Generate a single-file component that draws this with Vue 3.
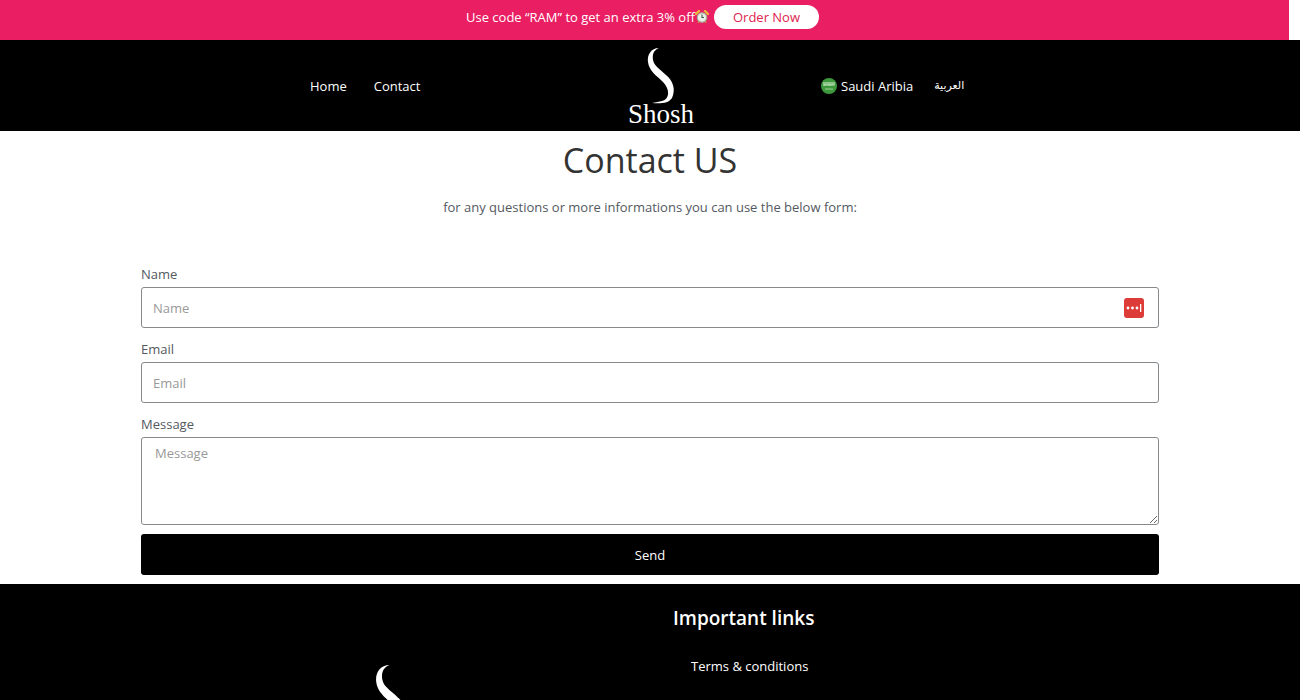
<script setup>
import { ref } from 'vue'

const name = ref('')
const email = ref('')
const message = ref('')
const swoosh = 'M31 0C23 0 19 7 20 14C21 23 29 28 35 34C42 41 42 51 34 53C31 54 28 54 24 55C33 56 41 55 44 50C48 41 45 33 38 27C32 21 26 18 25 12C24 6 26 2 31 0Z'
</script>

<template>
  <div class="page">
    <div class="promo">
      <span class="promo-text">Use code “RAM” to get an extra 3% off</span>
      <svg class="clock" viewBox="0 0 14 14" aria-hidden="true">
        <path d="M1 4L4 1M10 1L13 4" stroke="#efb53d" stroke-width="2.4" stroke-linecap="round" />
        <path d="M3 13L4 11M11 13L10 11" stroke="#cf8f3a" stroke-width="1.4" />
        <circle cx="7" cy="7.500" r="4.700" fill="#e9f1e6" stroke="#a9ad98" stroke-width="1.200" />
        <path d="M7 4.500V7.500H9" fill="none" stroke="#48574f" stroke-width="1.100" />
      </svg>
      <button class="order" type="button">Order Now</button>
    </div>

    <header class="header">
      <div class="header-inner">
        <nav class="nav">
          <a href="#">Home</a>
          <a href="#">Contact</a>
        </nav>
        <a class="logo" href="#">
          <svg class="logo-mark" viewBox="0 0 66 56" aria-hidden="true"><path :d="swoosh" fill="#fff" /></svg>
          <span class="logo-name">Shosh</span>
        </a>
        <nav class="locale">
          <a class="country" href="#">
            <svg class="flag" viewBox="0 0 16 16" aria-hidden="true">
              <circle cx="8" cy="8" r="8" fill="#3c9a3c" />
              <path d="M3 4V8M5 4V7H7V4M9 4V8M11 4V7H13V4M3 7H13" fill="none" stroke="#c4e3bd" stroke-width="1.200" />
              <path d="M4 11H12" stroke="#9dcf98" />
            </svg>
            <span>Saudi Aribia</span>
          </a>
          <a class="arabic" href="#" lang="ar">العربية</a>
        </nav>
      </div>
    </header>

    <main class="main">
      <h1>Contact US</h1>
      <p class="intro">for any questions or more informations you can use the below form:</p>
      <form class="form" @submit.prevent>
        <label for="name">Name</label>
        <div class="field">
          <input id="name" v-model="name" type="text" placeholder="Name" />
          <svg class="filler" viewBox="0 0 20 20" aria-hidden="true">
            <rect width="20" height="20" rx="3" fill="#dc3b38" />
            <circle cx="4" cy="10" r="1.400" fill="#fff" />
            <circle cx="8.500" cy="10" r="1.400" fill="#fff" />
            <circle cx="13" cy="10" r="1.400" fill="#fff" />
            <rect x="16" y="6" width="1.300" height="8" fill="#fff" />
          </svg>
        </div>
        <label for="email">Email</label>
        <div class="field">
          <input id="email" v-model="email" type="email" placeholder="Email" />
        </div>
        <label for="message">Message</label>
        <textarea id="message" v-model="message" placeholder="Message"></textarea>
        <button class="send" type="submit">Send</button>
      </form>
    </main>

    <footer class="footer">
      <div class="footer-inner">
        <div class="footer-brand">
          <svg class="footer-mark" viewBox="0 0 66 56" aria-hidden="true"><path :d="swoosh" fill="#fff" /></svg>
        </div>
        <div class="links">
          <h2>Important links</h2>
          <a href="#">Terms &amp; conditions</a>
        </div>
      </div>
    </footer>
  </div>
</template>

<style>
body {
  margin: 0;
  background: #fff;
}
</style>

<style scoped>
.page {
  display: flex;
  flex-direction: column;
  height: 100vh;
  overflow: hidden;
  font-family: "Open Sans", "Noto Sans", sans-serif;
  font-size: 13px;
  line-height: 20px;
  color: #54595f;
}
.page * {
  box-sizing: border-box;
}
a {
  color: #fff;
  text-decoration: none;
}
button,
input,
textarea {
  font: inherit;
}
.promo {
  display: flex;
  flex: none;
  align-items: center;
  justify-content: center;
  height: 40px;
  margin-right: 11px;
  padding: 0 4px 6px 0;
  background: #e91e63;
  color: #fff;
}
.clock {
  width: 14px;
  height: 14px;
}
.order {
  height: 24px;
  margin-left: 5px;
  padding: 0 19px;
  border: 0;
  border-radius: 12px;
  background: #fff;
  color: #e0234e;
}
.header {
  flex: none;
  background: #000;
}
.header-inner {
  display: grid;
  grid-template-columns: 318px 66px 1fr;
  max-width: 680px;
  height: 91px;
  margin: 0 auto;
}
.nav,
.locale,
.country {
  display: flex;
  align-items: center;
}
.nav {
  gap: 27px;
}
.locale {
  gap: 21px;
  padding-left: 127px;
}
.country {
  gap: 4px;
}
.flag {
  width: 16px;
  height: 16px;
}
.arabic {
  font-family: "DejaVu Sans", sans-serif;
  font-size: 11px;
}
.logo {
  display: flex;
  flex-direction: column;
  align-items: center;
  padding-top: 8px;
}
.logo-mark {
  flex: none;
  width: 66px;
  height: 56px;
}
.logo-name {
  font-family: "Liberation Serif", serif;
  font-size: 27px;
  line-height: 20px;
}
.main {
  flex: none;
  padding: 7px 24px 9px;
}
h1 {
  margin: 0;
  color: #333;
  font-size: 34px;
  font-weight: 400;
  line-height: 44px;
  text-align: center;
}
.intro {
  margin: 15px 0 47px;
  text-align: center;
}
.form {
  display: flex;
  flex-direction: column;
  max-width: 1018px;
  margin: 0 auto;
}
label {
  margin-bottom: 3px;
}
.field {
  position: relative;
  margin-bottom: 11px;
}
input,
textarea {
  display: block;
  width: 100%;
  margin: 0;
  border: 1px solid #85898c;
  border-radius: 3px;
  background: #fff;
  color: #54595f;
}
input {
  height: 41px;
  padding: 0 11px;
}
textarea {
  height: 88px;
  margin-bottom: 9px;
  padding: 5px 13px;
  resize: vertical;
}
input::placeholder,
textarea::placeholder {
  color: #999;
}
.filler {
  position: absolute;
  top: 11px;
  right: 15px;
  width: 20px;
  height: 20px;
}
.send {
  height: 41px;
  border: 0;
  border-radius: 3px;
  background: #000;
  color: #fff;
}
.footer {
  flex: 1;
  padding: 0 24px;
  background: #000;
  color: #fff;
}
.footer-inner {
  display: grid;
  grid-template-columns: 1fr 1fr;
  gap: 16px;
  max-width: 1018px;
  margin: 0 auto;
}
.footer-brand {
  display: flex;
  justify-content: center;
  padding-top: 81px;
}
.footer-mark {
  width: 80px;
  height: 68px;
}
.links {
  padding: 20px 15px;
}
h2 {
  margin: 0 0 24px;
  font-size: 19px;
  font-weight: 600;
  line-height: 28px;
}
.links a {
  margin-left: 18px;
}
</style>
